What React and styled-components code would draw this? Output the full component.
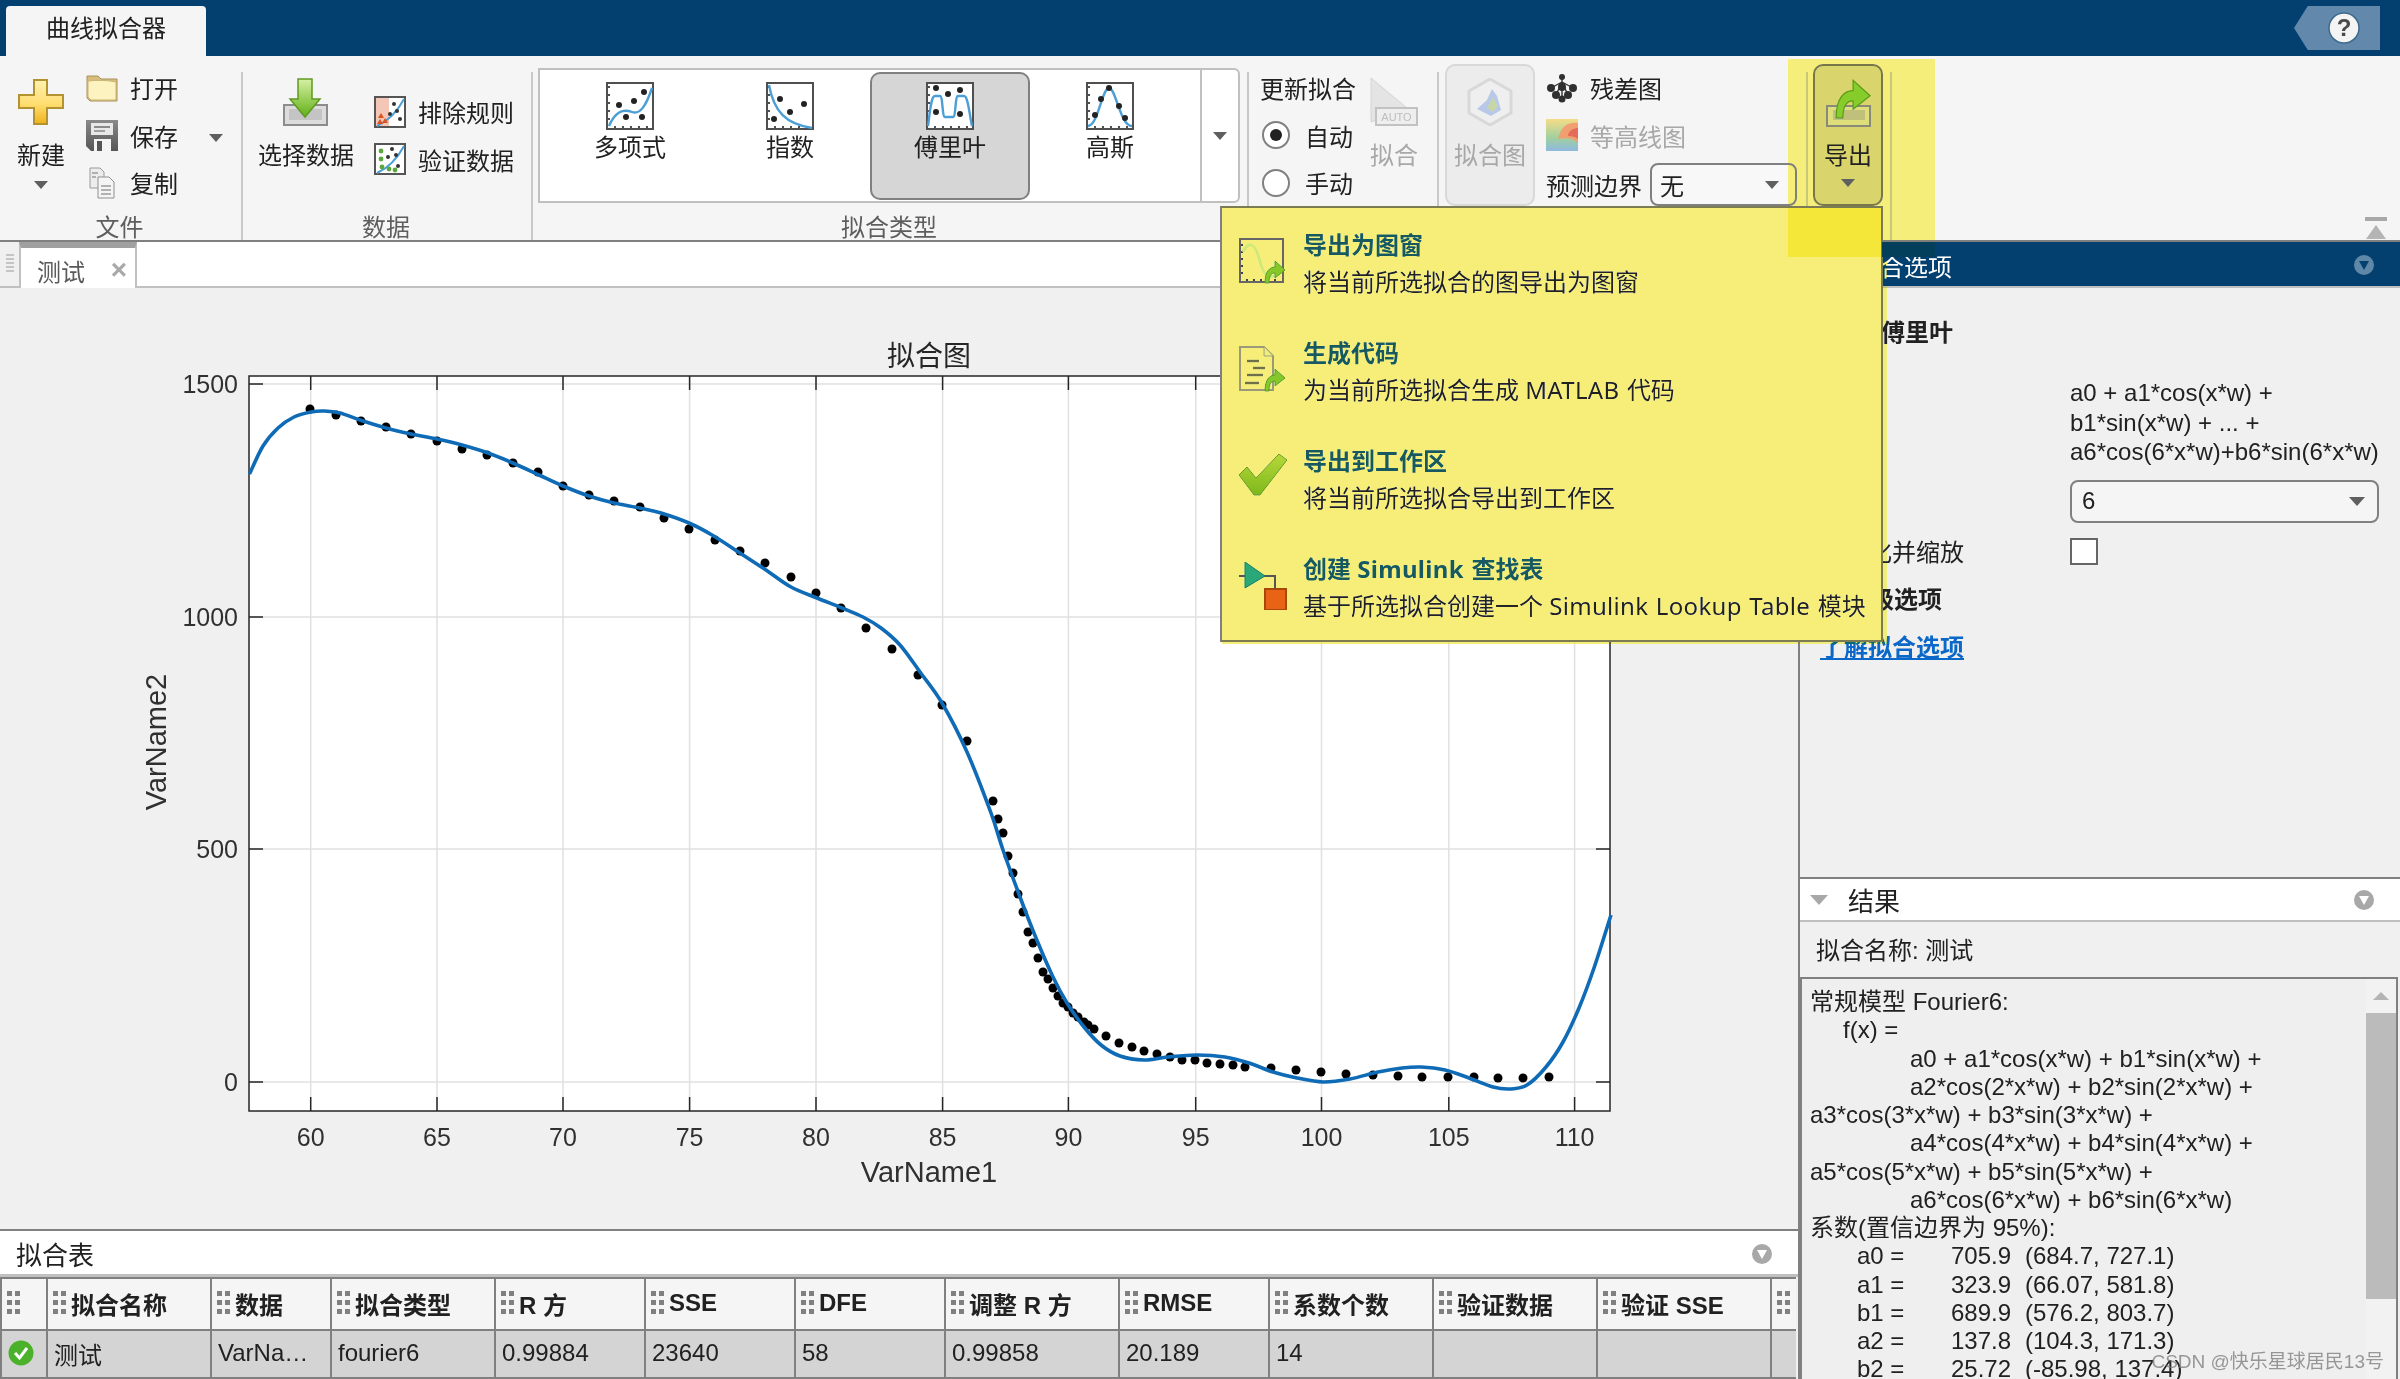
import React from 'react';
import styled, { createGlobalStyle } from 'styled-components';

const SANS = '"Liberation Sans", "Noto Sans CJK SC", sans-serif';
const UI = '"Noto Sans", "Noto Sans CJK SC", sans-serif';

const GlobalStyle = createGlobalStyle`
  html, body { margin: 0; padding: 0; background: #f0f0f0; }
  * { box-sizing: border-box; }
`;

/* ---------- chart data, in screen pixels of the plot ---------- */
const CURVE = [
  [249.5,474],[263,446],[278,428],[294,417],[311,412],[324.5,411],[340,413],[360,420],[386,428],[411,434],
  [437,439],[462,445],[488,453],[513,463],[539,475],[563,486],[589,496],[614,503],[640,508],[661,513],
  [689,523],[712,535],[740,553],[766,570],[791,587],[817,598],[842,608],[863,617],[881,628],[900,645],
  [920,672],[942,703],[967,752],[991,813],[1003,850],[1020,897],[1036,938],[1053,977],[1067,1003],[1084,1027],
  [1101,1045],[1120,1056],[1144,1060],[1168,1057],[1197,1055],[1225,1057],[1249,1063],[1273,1072],[1297,1078],[1323,1082],
  [1350,1079],[1378,1072],[1402,1068],[1421,1067],[1445,1070],[1469,1078],[1493,1087],[1510,1089],[1527,1085],[1546,1067],
  [1563,1042],[1579,1008],[1594,968],[1611,915],
];
const DOTS = [
  [310,409],[336,415],[361,421],[386,427],[411,434],[437,441],[462,449],[487,455],[513,463],[538,472],
  [563,486],[589,495],[614,501],[640,507],[664,518],[689,529],[715,540],[740,551],[765,563],[791,577],
  [816,593],[841,608],[866,628],[892,649],[918,675],[942,705],[967,741],[993,801],[998,819],[1003,833],
  [1008,856],[1013,873],[1018,894],[1023,912],[1028,932],[1033,943],[1038,958],[1043,972],[1048,979],[1053,988],
  [1058,996],[1063,1003],[1068,1007],[1073,1013],[1078,1017],[1084,1022],[1088,1025],[1094,1029],[1106,1036],[1119,1043],
  [1132,1047],[1144,1051],[1157,1054],[1170,1057],[1182,1060],[1195,1060],[1207,1063],[1220,1064],[1233,1065],[1245,1067],
  [1271,1068],[1296,1070],[1321,1072],[1346,1074],[1373,1075],[1398,1076],[1422,1077],[1448,1077],[1474,1077],[1498,1078],
  [1523,1078],[1549,1077],
];
const X_TICKS = [[60,310.7],[65,437],[70,563],[75,689.6],[80,816],[85,942.6],[90,1068.4],[95,1195.7],[100,1321.5],[105,1448.8],[110,1574.6]];
const Y_TICKS = [[1500,384],[1000,617],[500,849],[0,1082]];

// catmull-rom through the points so the fit is smooth
const smoothPath = (pts) => {
  let d = `M${pts[0][0]} ${pts[0][1]}`;
  for (let i = 0; i < pts.length - 1; i++) {
    const p0 = pts[i - 1] || pts[i];
    const p1 = pts[i];
    const p2 = pts[i + 1];
    const p3 = pts[i + 2] || p2;
    d += ` C${p1[0] + (p2[0] - p0[0]) / 6} ${p1[1] + (p2[1] - p0[1]) / 6} ${p2[0] - (p3[0] - p1[0]) / 6} ${p2[1] - (p3[1] - p1[1]) / 6} ${p2[0]} ${p2[1]}`;
  }
  return d;
};

/* ---------- icons ---------- */
const GREEN_ARROW = 'M3 24C3 12 8 8 13 8L13 2L23 11L13 19L13 14C9 14 7 17 7 24Z';

const PlusIcon = () => (
  <svg width="46" height="46" viewBox="0 0 46 46">
    <defs>
      <linearGradient id="plusFill" x1="0" y1="0" x2="0" y2="1">
        <stop offset="0" stopColor="#fff1b0" /><stop offset="0.55" stopColor="#ffdd70" /><stop offset="1" stopColor="#eeb21c" />
      </linearGradient>
    </defs>
    <path d="M16 1H29V16H45V29H29V45H16V29H1V16H16Z" fill="url(#plusFill)" stroke="#b39230" strokeWidth="2" />
  </svg>
);
const FolderIcon = () => (
  <svg width="32" height="28" viewBox="0 0 32 28">
    <path d="M1 2H12L15 5H31V27H4L1 24Z" fill="#d8bd7c" stroke="#a8925c" />
    <path d="M2 7C10 6 22 6 30 8V26H5L2 23Z" fill="#fdf3c0" stroke="#c9b475" />
  </svg>
);
const SaveIcon = () => (
  <svg width="32" height="32" viewBox="0 0 32 32">
    <defs>
      <linearGradient id="saveFill" x1="0" y1="0" x2="0" y2="1">
        <stop offset="0" stopColor="#8a8a8a" /><stop offset="1" stopColor="#555" />
      </linearGradient>
    </defs>
    <path d="M0 1H32V32H5L0 27Z" fill="url(#saveFill)" />
    <rect x="5" y="4" width="22" height="12" fill="#e8e8e8" />
    <rect x="8" y="7" width="16" height="2" fill="#8a8a8a" />
    <rect x="8" y="11" width="11" height="2" fill="#a0a0a0" />
    <rect x="8" y="20" width="17" height="12" fill="#f4f4f4" />
    <rect x="11" y="22" width="5" height="10" fill="#555" />
  </svg>
);
const CopyIcon = () => (
  <svg width="26" height="32" viewBox="0 0 26 32">
    <path d="M1 1H11L15 5V21H1Z" fill="#ececec" stroke="#9a9a9a" />
    <path d="M9 10H20L25 15V31H9Z" fill="#f4f4f4" stroke="#8f8f8f" />
    <path d="M12 19H22M12 23H22M12 27H22M3 6H9M3 10H7" stroke="#9a9a9a" strokeWidth="1.5" />
  </svg>
);
const ImportIcon = () => (
  <svg width="46" height="48" viewBox="0 0 46 48">
    <defs>
      <linearGradient id="impFill" x1="0" y1="0" x2="0" y2="1">
        <stop offset="0" stopColor="#d6f0a4" /><stop offset="1" stopColor="#62b016" />
      </linearGradient>
    </defs>
    <rect x="1" y="27" width="43" height="20" fill="#dcdcdc" stroke="#8c8c8c" strokeWidth="2" />
    <rect x="6" y="31" width="33" height="11" fill="#c4c4c4" />
    <path d="M15 1H29V21H37L22 39L7 21H15Z" fill="url(#impFill)" stroke="#5f9a20" strokeWidth="1.5" />
  </svg>
);

const Ticks = () => (
  <path d="M3 4V40M8 45H46" stroke="#505050" strokeWidth="2" strokeDasharray="2 6" fill="none" />
);
const FitIcon = ({ curve, dots }) => (
  <svg width="48" height="48" viewBox="0 0 48 48">
    <rect x="1" y="1" width="46" height="46" fill="#fff" stroke="#4f4f4f" strokeWidth="2" />
    <Ticks />
    <path d={curve} fill="none" stroke="#4c9ed6" strokeWidth="2.4" />
    {dots.map(([x, y]) => <circle key={`${x}-${y}`} cx={x} cy={y} r="3" fill="#222" />)}
  </svg>
);
const ExcludeIcon = () => (
  <svg width="32" height="32" viewBox="0 0 32 32">
    <rect x="1" y="1" width="30" height="30" fill="#fff" stroke="#555" strokeWidth="2" />
    <rect x="2" y="2" width="13" height="28" fill="#f3c6b8" />
    <path d="M3 30C12 26 22 18 30 3" fill="none" stroke="#4c9ed6" strokeWidth="2" />
    {[[20, 8], [23, 15], [16, 18], [26, 23]].map(([x, y]) => <circle key={x} cx={x} cy={y} r="2" fill="#333" />)}
    {[[7, 20], [11, 25], [6, 26]].map(([x, y]) => <path key={x} d={`M${x - 3} ${y + 2}L${x} ${y - 3}L${x + 3} ${y + 2}Z`} fill="#e0521e" />)}
  </svg>
);
const ValidateIcon = () => (
  <svg width="32" height="32" viewBox="0 0 32 32">
    <rect x="1" y="1" width="30" height="30" fill="#fff" stroke="#555" strokeWidth="2" />
    <path d="M3 30C12 26 22 18 30 3" fill="none" stroke="#4c9ed6" strokeWidth="2" />
    {[[18, 6], [22, 12], [14, 14], [24, 23]].map(([x, y]) => <circle key={x} cx={x} cy={y} r="2" fill="#333" />)}
    {[[7, 8], [7, 16], [8, 24], [15, 26], [21, 27]].map(([x, y]) => <circle key={x + y} cx={x} cy={y} r="2.4" fill="#5aa83a" />)}
  </svg>
);
const AutoFitIcon = () => (
  <svg width="50" height="48" viewBox="0 0 50 48">
    <path d="M2 0L38 30L2 44Z" fill="#e4e4e4" stroke="#d4d4d4" />
    <rect x="7" y="30" width="41" height="17" fill="#eeeeee" stroke="#c2c2c2" strokeWidth="2" />
    <AutoLabel x="27.5" y="43">AUTO</AutoLabel>
  </svg>
);
const SurfaceIcon = () => (
  <svg width="46" height="48" viewBox="0 0 46 48">
    <path d="M23 1L44 13V35L23 47L2 35V13Z" fill="#efefef" stroke="#d8d8d8" strokeWidth="3" />
    <path d="M10 31L20 22L25 11L30 18L34 32L24 38Z" fill="#b8c8e8" />
    <path d="M20 30L26 19L31 28L26 34Z" fill="#c7d6a8" />
  </svg>
);
const ResidualIcon = () => (
  <svg width="32" height="30" viewBox="0 0 32 30">
    <path d="M16 3V26M16 9L5 15M16 9L27 15M16 9L10 22M16 9L22 22" stroke="#333" strokeWidth="1.4" fill="none" />
    {[[16, 4, 3], [5, 15, 4], [27, 15, 4], [16, 14, 4], [10, 22, 4], [22, 22, 4], [16, 26, 3.5]].map(([x, y, r]) => (
      <circle key={`${x}${y}`} cx={x} cy={y} r={r} fill="#303030" />
    ))}
  </svg>
);
const ContourIcon = () => (
  <svg width="32" height="32" viewBox="0 0 32 32">
    <defs>
      <linearGradient id="contourFill" x1="0" y1="0" x2="0" y2="1">
        <stop offset="0" stopColor="#f5dc88" /><stop offset="0.6" stopColor="#9fd0a0" /><stop offset="1" stopColor="#8fb8e0" />
      </linearGradient>
    </defs>
    <rect width="32" height="32" fill="url(#contourFill)" />
    <path d="M32 4C18 2 14 12 12 20C22 18 28 20 32 24Z" fill="#f0a070" />
    <path d="M32 9C26 9 22 13 22 17C26 17 30 18 32 20Z" fill="#e46a5a" />
  </svg>
);
const ExportIcon = () => (
  <svg width="46" height="50" viewBox="0 0 46 50">
    <rect x="2" y="29" width="43" height="20" fill="#dedede" stroke="#8a8a8a" strokeWidth="2" />
    <rect x="8" y="33" width="32" height="10" fill="#c0c0c0" />
    <g transform="translate(6 0) scale(1.7)">
      <path d={GREEN_ARROW} fill="#86cc2a" stroke="#5a9a16" strokeWidth="0.7" />
    </g>
  </svg>
);
const FigureMenuIcon = () => (
  <svg width="48" height="48" viewBox="0 0 48 48">
    <rect x="1" y="1" width="43" height="43" fill="#fff" stroke="#666" strokeWidth="2" />
    <path d="M3 6V38M7 42H40" stroke="#444" strokeWidth="2" strokeDasharray="2 5" />
    <path d="M4 14C10 2 16 6 20 20C24 36 28 40 36 38" fill="none" stroke="#cfe8a0" strokeWidth="3" />
    <g transform="translate(23 21)"><path d={GREEN_ARROW} fill="#86c82a" stroke="#5a9a16" /></g>
  </svg>
);
const CodeMenuIcon = () => (
  <svg width="48" height="48" viewBox="0 0 48 48">
    <path d="M1 1H25L34 10V44H1Z" fill="#fff" stroke="#9a9a7a" strokeWidth="2" />
    <path d="M25 1V10H34" fill="#eee" stroke="#9a9a7a" />
    <path d="M8 15H20M14 22H26M8 29H24M6 37H20" stroke="#6f6f4a" strokeWidth="2.4" />
    <g transform="translate(23 21)"><path d={GREEN_ARROW} fill="#86c82a" stroke="#5a9a16" /></g>
  </svg>
);
const CheckMenuIcon = () => (
  <svg width="48" height="42" viewBox="0 0 48 42">
    <defs>
      <linearGradient id="checkFill" x1="0" y1="0" x2="0" y2="1">
        <stop offset="0" stopColor="#b8d83a" /><stop offset="1" stopColor="#7db81c" />
      </linearGradient>
    </defs>
    <path d="M0 21L8 13L17 24L40 0L48 6L21 41H15Z" fill="url(#checkFill)" stroke="#6a9a18" />
  </svg>
);
const SimulinkMenuIcon = () => (
  <svg width="48" height="48" viewBox="0 0 48 48">
    <path d="M0 14H36V28" fill="none" stroke="#555" strokeWidth="2" />
    <path d="M6 0L26 14L6 26Z" fill="#2aa878" stroke="#1a7a60" />
    <rect x="26" y="27" width="21" height="21" fill="#e86414" stroke="#a84808" strokeWidth="2" />
  </svg>
);
const RoundDown = ({ $light }) => (
  <svg width="20" height="22" viewBox="0 0 20 22">
    <circle cx="10" cy="11" r="10" fill={$light ? '#5f87a8' : '#a8a8a8'} />
    <path d="M5 7H15L10 16Z" fill={$light ? '#03406f' : '#fff'} />
  </svg>
);
const StatusOk = () => (
  <svg width="26" height="26" viewBox="0 0 26 26">
    <circle cx="13" cy="13" r="12.5" fill="#4bb02a" />
    <path d="M7 13L11.5 18L19 8" fill="none" stroke="#fff" strokeWidth="3" />
  </svg>
);
const Grip = () => (
  <svg width="13" height="24" viewBox="0 0 13 24">
    {[0, 9, 18].map((y) => (
      <g key={y}>
        <rect x="0" y={y} width="5" height="5" fill="#808080" />
        <rect x="8" y={y} width="5" height="5" fill="#808080" />
      </g>
    ))}
  </svg>
);
const PinIcon = () => (
  <svg width="22" height="22" viewBox="0 0 22 22">
    <rect width="22" height="4" fill="#a8a8a8" />
    <path d="M11 8L21 22H1Z" fill="#b4b4b4" />
  </svg>
);
const HelpIcon = () => (
  <svg width="32" height="32" viewBox="0 0 32 32">
    <circle cx="16" cy="16" r="15" fill="#f4f4f4" stroke="#3f6a8c" strokeWidth="1.5" />
    <HelpMark x="16" y="24">?</HelpMark>
  </svg>
);

const AutoLabel = styled.text`
  font: 11px ${SANS};
  fill: #bdbdbd;
  text-anchor: middle;
`;
const HelpMark = styled.text`
  font: bold 24px ${SANS};
  fill: #4a4a4a;
  text-anchor: middle;
`;

/* ---------- app frame ---------- */
const Page = styled.div`
  position: relative;
  isolation: isolate;
  width: 2400px;
  height: 1379px;
  overflow: hidden;
  display: flex;
  flex-direction: column;
  font-family: ${SANS};
  font-size: 24px;
  color: #212121;
  background: #f0f0f0;
`;
const TitleBar = styled.div`
  flex: none;
  height: 56px;
  padding-top: 6px;
  display: flex;
  background: #03406f;
`;
const AppTab = styled.div`
  width: 200px;
  margin-left: 6px;
  height: 50px;
  line-height: 44px;
  text-align: center;
  font-family: ${UI};
  background: #f5f5f5;
  border-radius: 4px 4px 0 0;
`;
const HelpButton = styled.div`
  margin-left: auto;
  margin-right: 20px;
  width: 86px;
  height: 44px;
  padding-left: 34px;
  padding-top: 6px;
  background: #6289ac;
  clip-path: polygon(16% 0, 100% 0, 100% 100%, 16% 100%, 0 50%);
`;

/* ---------- ribbon ---------- */
const Ribbon = styled.div`
  flex: none;
  height: 186px;
  display: flex;
  font-family: ${UI};
  background: #f5f5f5;
  border-bottom: 2px solid #808080;
`;
const Sep = styled.div`
  flex: none;
  width: 2px;
  height: 168px;
  margin-top: 16px;
  background: #c8c8c8;
`;
const Group = styled.div`
  flex: none;
  width: ${(p) => p.$w}px;
  height: 184px;
  display: flex;
  flex-direction: column;
`;
const GroupBody = styled.div`
  flex: none;
  height: 156px;
  display: flex;
  align-items: flex-start;
`;
const GroupLabel = styled.div`
  height: 28px;
  padding: 1px 2px 0 0;
  line-height: 28px;
  text-align: center;
  color: #5e5e5e;
`;
const LargeButton = styled.div`
  flex: none;
  width: ${(p) => p.$w}px;
  margin-left: ${(p) => p.$ml || 0}px;
  padding-top: 22px;
  display: flex;
  flex-direction: column;
  align-items: center;
  color: ${(p) => (p.$muted ? '#a8a8a8' : '#212121')};
`;
const BoxButton = styled.div`
  flex: none;
  width: ${(p) => p.$w}px;
  height: 142px;
  margin-left: ${(p) => p.$ml || 0}px;
  margin-top: 8px;
  padding-top: 12px;
  display: flex;
  flex-direction: column;
  align-items: center;
  border-radius: 10px;
  border: 2px solid ${(p) => (p.$active ? '#77774a' : '#d8d8d8')};
  background: ${(p) => (p.$active ? '#d9d46c' : '#ececec')};
  color: ${(p) => (p.$active ? '#212121' : '#a8a8a8')};
`;
const IconBox = styled.div`
  height: 48px;
  display: flex;
  align-items: center;
  justify-content: center;
`;
const BigLabel = styled.div`
  margin-top: 15px;
  line-height: 28px;
  white-space: nowrap;
`;
const DownArrow = styled.div`
  flex: none;
  width: 0;
  height: 0;
  border-left: ${(p) => p.$s || 7}px solid transparent;
  border-right: ${(p) => p.$s || 7}px solid transparent;
  border-top: ${(p) => (p.$s || 7) + 1}px solid ${(p) => p.$c || '#5f5f5f'};
  margin-top: ${(p) => p.$mt || 0}px;
  margin-left: ${(p) => p.$ml || 0}px;
  margin-right: ${(p) => p.$mr || 0}px;
`;
const SmallList = styled.div`
  flex: none;
  width: ${(p) => p.$w}px;
  margin-left: ${(p) => p.$ml || 0}px;
  padding-top: ${(p) => p.$top}px;
  display: flex;
  flex-direction: column;
`;
const SmallRow = styled.div`
  height: 47.5px;
  display: flex;
  align-items: center;
  gap: 12px;
  white-space: nowrap;
  color: ${(p) => (p.$muted ? '#a8a8a8' : '#212121')};
`;
const IconSlot = styled.div`
  flex: none;
  width: 32px;
  display: flex;
  justify-content: center;
`;
const Radio = styled.div`
  flex: none;
  width: 28px;
  height: 28px;
  margin-left: 2px;
  margin-right: 3px;
  border-radius: 50%;
  background: #fff;
  border: 2px solid #808080;
  display: flex;
  align-items: center;
  justify-content: center;
  &::after {
    content: '';
    width: 12px;
    height: 12px;
    border-radius: 50%;
    background: ${(p) => (p.$on ? '#212121' : 'transparent')};
  }
`;
const BoundsRow = styled.div`
  margin-top: 4px;
  height: 43px;
  display: flex;
  align-items: center;
  gap: 8px;
  white-space: nowrap;
`;
const BoundsSelect = styled.div`
  width: 147px;
  height: 43px;
  padding: 0 16px 0 8px;
  display: flex;
  align-items: center;
  justify-content: space-between;
  background: #f8f8f8;
  border: 2px solid #808080;
  border-radius: 8px;
`;
const Gallery = styled.div`
  flex: none;
  width: 702px;
  height: 135px;
  margin-left: 5px;
  margin-top: 12px;
  padding-left: 10px;
  display: flex;
  background: #fff;
  border: 2px solid #c0c0c0;
  border-radius: 0 6px 6px 0;
`;
const GalleryItem = styled.div`
  flex: none;
  width: 160px;
  height: 128px;
  margin-top: 2px;
  padding-top: 8px;
  display: flex;
  flex-direction: column;
  align-items: center;
  border-radius: 10px;
  border: 2px solid ${(p) => (p.$on ? '#808080' : 'transparent')};
  background: ${(p) => (p.$on ? '#d6d6d6' : 'transparent')};
`;
const GalleryLabel = styled.div`
  margin-top: 3px;
  line-height: 28px;
`;
const GalleryScroll = styled.div`
  margin-left: auto;
  width: 38px;
  display: flex;
  align-items: center;
  justify-content: center;
  border-left: 2px solid #c0c0c0;
`;
const PinSlot = styled.div`
  margin-left: auto;
  margin-right: 13px;
  align-self: flex-end;
  margin-bottom: 5px;
  height: 22px;
`;

/* ---------- work area ---------- */
const Work = styled.div`
  flex: 1;
  min-height: 0;
  display: flex;
`;
const LeftPane = styled.div`
  flex: none;
  width: 1798px;
  display: flex;
  flex-direction: column;
`;
const DocStrip = styled.div`
  flex: none;
  height: 46px;
  display: flex;
  background: #fff;
  border-bottom: 2px solid #c0c0c0;
`;
const StripGrip = styled.div`
  width: 19px;
  background: #f0f0f0;
  display: flex;
  justify-content: center;
  padding-top: 12px;
  &::after {
    content: '';
    width: 8px;
    height: 20px;
    background: repeating-linear-gradient(#c4c4c4 0 2px, transparent 2px 4px);
  }
`;
const DocTab = styled.div`
  width: 118px;
  height: 46px;
  display: flex;
  align-items: center;
  justify-content: space-between;
  padding: 4px 8px 0 16px;
  font-family: ${UI};
  color: #5a5a5a;
  background: #fff;
  border-top: 6px solid #a0a0a0;
  border-left: 2px solid #c0c0c0;
  border-right: 2px solid #c0c0c0;
`;
const TabClose = styled.span`
  font: bold 28px ${SANS};
  color: #a8a8a8;
`;
const PlotArea = styled.div`
  flex: 1;
  min-height: 0;
`;
const PlotSvg = styled.svg`
  display: block;
  width: 1798px;
  height: 940px;
`;
const PlotTitle = styled.text`
  font: 28px ${UI};
  fill: #262626;
  text-anchor: middle;
`;
const TickText = styled.text`
  font: 25px ${SANS};
  fill: #303030;
  text-anchor: ${(p) => p.$anchor};
`;
const AxisLabel = styled.text`
  font: 29px ${SANS};
  fill: #303030;
  text-anchor: middle;
`;
const PanelHead = styled.div`
  flex: none;
  height: 48px;
  padding: 2px 26px 0 16px;
  display: flex;
  align-items: center;
  justify-content: space-between;
  font-size: 26px;
  font-family: ${UI};
  background: #fff;
  border-top: 2px solid #808080;
  border-bottom: 3px solid #c0c0c0;
`;
const COLS = '46px 164px 120px 164px 150px 150px 150px 174px 150px 164px 164px 174px 24px';
const Table = styled.div`
  flex: none;
  width: 1796px;
  height: 102px;
  display: flex;
  flex-direction: column;
  border-top: 2px solid #808080;
  border-left: 2px solid #808080;
  border-bottom: 2px solid #808080;
`;
const TableHeadRow = styled.div`
  height: 52px;
  display: grid;
  grid-template-columns: ${COLS};
  background: #f5f5f5;
  border-bottom: 2px solid #808080;
`;
const TableBodyRow = styled.div`
  flex: 1;
  display: grid;
  grid-template-columns: ${COLS};
  background: #d4d4d4;
`;
const HeadCell = styled.div`
  display: flex;
  align-items: center;
  gap: 5px;
  padding: 0 0 2px 5px;
  font-weight: bold;
  white-space: nowrap;
  border-right: 2px solid #808080;
  &:last-child { border-right: 0; }
`;
const BodyCell = styled.div`
  display: flex;
  align-items: center;
  padding: 0 0 2px 6px;
  white-space: nowrap;
  border-right: 2px solid #808080;
  &:last-child { border-right: 0; }
`;

/* ---------- right pane ---------- */
const RightPane = styled.div`
  flex: none;
  width: 602px;
  display: flex;
  flex-direction: column;
  border-left: 2px solid #808080;
`;
const OptionsHead = styled.div`
  flex: none;
  height: 46px;
  padding: 2px 26px 0 56px;
  display: flex;
  align-items: center;
  justify-content: space-between;
  color: #fff;
  font-family: ${UI};
  background: #03406f;
  border-bottom: 2px solid #c0c0c0;
`;
const OptionsBody = styled.div`
  flex: 1;
  min-height: 0;
  padding: 31px 0 0 20px;
  display: grid;
  grid-template-columns: 250px 309px;
  grid-auto-rows: min-content;
  align-content: start;
`;
const FitName = styled.div`
  grid-column: 1 / -1;
  margin-left: 61px;
  line-height: 28px;
  font-weight: bold;
`;
const Formula = styled.div`
  grid-column: 2;
  margin-top: 31px;
  line-height: 29.5px;
`;
const FieldSelect = styled.div`
  grid-column: 2;
  margin-top: 13px;
  height: 43px;
  padding: 0 12px 0 10px;
  display: flex;
  align-items: center;
  justify-content: space-between;
  background: #f5f5f5;
  border: 2px solid #808080;
  border-radius: 8px;
`;
const FieldLabel = styled.div`
  margin-top: 15px;
  line-height: 28px;
  font-family: ${UI};
`;
const Checkbox = styled.div`
  margin-top: 15px;
  width: 28px;
  height: 27px;
  background: #fff;
  border: 2px solid #666;
`;
const SectionTitle = styled.div`
  grid-column: 1 / -1;
  margin-top: 20px;
  padding-left: 26px;
  line-height: 28px;
  font-weight: bold;
`;
const HelpLink = styled.a`
  grid-column: 1 / -1;
  margin-top: 20px;
  line-height: 28px;
  font-weight: bold;
  color: #0b68c8;
  text-decoration: underline;
`;
const ResultsHead = styled.div`
  flex: none;
  height: 45px;
  padding: 0 26px 0 8px;
  display: flex;
  align-items: center;
  font-size: 26px;
  font-family: ${UI};
  background: #fff;
  border-top: 2px solid #808080;
  border-bottom: 2px solid #c0c0c0;
`;
const HeadText = styled.span`
  margin-left: 20px;
  margin-right: auto;
`;
const ResultName = styled.div`
  flex: none;
  height: 55px;
  padding: 0 0 3px 16px;
  display: flex;
  align-items: center;
`;
const ResultBox = styled.div`
  flex: none;
  width: 598px;
  height: 402px;
  display: flex;
  border: 2px solid #808080;
  border-bottom: 0;
  background: #efefef;
`;
const ResultText = styled.div`
  flex: 1;
  min-width: 0;
  padding: 9px 0 0 8px;
  overflow: hidden;
  line-height: 28.25px;
  white-space: nowrap;
`;
const ResultLine = styled.div`
  padding-left: ${(p) => p.$indent || 0}px;
`;
const CoefRow = styled.div`
  padding-left: 47px;
  display: grid;
  grid-template-columns: 94px 74px auto;
`;
const ScrollTrack = styled.div`
  flex: none;
  width: 30px;
  background: #f2f2f2;
  display: flex;
  flex-direction: column;
  align-items: center;
`;
const ScrollUp = styled.div`
  height: 34px;
  padding-top: 13px;
  &::after {
    content: '';
    display: block;
    border-left: 8px solid transparent;
    border-right: 8px solid transparent;
    border-bottom: 8px solid #b4b4b4;
  }
`;
const ScrollThumb = styled.div`
  width: 30px;
  height: 286px;
  background: #bbbbbb;
`;

/* ---------- export menu and the yellow marks drawn over the screenshot ---------- */
const ExportMenu = styled.div`
  position: absolute;
  left: 1220px;
  top: 206px;
  width: 663px;
  height: 436px;
  padding: 19px 0 0 17px;
  display: flex;
  flex-direction: column;
  gap: 34px;
  font-family: ${UI};
  background: #fff;
  border: 2px solid #7c7b52;
  border-left-color: #808080;
`;
const MenuItem = styled.div`
  height: 74px;
  display: flex;
  gap: 16px;
`;
const MenuIcon = styled.div`
  flex: none;
  width: 48px;
  margin-top: 11px;
`;
const MenuTitle = styled.div`
  line-height: 36px;
  font-weight: bold;
  color: #17595e;
`;
const MenuDesc = styled.div`
  line-height: 38px;
  white-space: nowrap;
`;
const Latin = styled.span`
  letter-spacing: 0.3px;
  word-spacing: 1px;
`;
const Highlight = styled.div`
  position: absolute;
  left: ${(p) => p.$x}px;
  top: ${(p) => p.$y}px;
  width: ${(p) => p.$w}px;
  height: ${(p) => p.$h}px;
  background: ${(p) => p.$c || '#f7ee7a'};
  mix-blend-mode: darken;
  pointer-events: none;
`;
const Watermark = styled.div`
  position: absolute;
  right: 16px;
  bottom: 6px;
  font-size: 19px;
  color: rgba(120, 120, 120, 0.75);
  white-space: nowrap;
`;

const GALLERY = [
  { name: '多项式', curve: 'M3 44C10 28 18 27 26 30S40 24 46 6', dots: [[38, 10], [28, 19], [13, 23], [20, 35], [36, 35]] },
  { name: '指数', curve: 'M3 3C8 30 20 42 46 46', dots: [[14, 17], [24, 30], [8, 37], [38, 22]] },
  { name: '傅里叶', on: true, curve: 'M2 44C4 30 5 14 9 14L14 14C17 14 16 35 19 35L27 35C30 35 29 14 32 14L38 14C42 14 43 30 46 44', dots: [[10, 6], [22, 12], [34, 8], [10, 30], [34, 32]] },
  { name: '高斯', curve: 'M2 44C12 44 16 6 23 6S34 44 46 44', dots: [[23, 6], [15, 17], [33, 24], [9, 33], [39, 36]] },
];

const HEADERS = ['', '拟合名称', '数据', '拟合类型', 'R 方', 'SSE', 'DFE', '调整 R 方', 'RMSE', '系数个数', '验证数据', '验证 SSE', ''];
const ROW = ['测试', 'VarNa…', 'fourier6', '0.99884', '23640', '58', '0.99858', '20.189', '14', '', '', ''];

const COEFS = [
  ['a0 =', '705.9', '(684.7, 727.1)'],
  ['a1 =', '323.9', '(66.07, 581.8)'],
  ['b1 =', '689.9', '(576.2, 803.7)'],
  ['a2 =', '137.8', '(104.3, 171.3)'],
  ['b2 =', '25.72', '(-85.98, 137.4)'],
];

const MENU = [
  { icon: <FigureMenuIcon />, title: '导出为图窗', desc: '将当前所选拟合的图导出为图窗' },
  { icon: <CodeMenuIcon />, title: '生成代码', desc: <>为当前所选拟合生成 <Latin>MATLAB </Latin>代码</> },
  { icon: <CheckMenuIcon />, title: '导出到工作区', desc: '将当前所选拟合导出到工作区' },
  { icon: <SimulinkMenuIcon />, title: <>创建 <Latin>Simulink </Latin>查找表</>, desc: <>基于所选拟合创建一个 <Latin>Simulink Lookup Table </Latin>模块</> },
];

const Plot = () => (
  <PlotSvg viewBox="0 288 1798 940">
    <PlotTitle x="929" y="366">拟合图</PlotTitle>
    <rect x="249" y="376" width="1361" height="735" fill="#fff" />
    {X_TICKS.map(([v, x]) => <line key={v} x1={x} x2={x} y1="376" y2="1111" stroke="#e0e0e0" strokeWidth="1.5" />)}
    {Y_TICKS.map(([v, y]) => <line key={v} x1="249" x2="1610" y1={y} y2={y} stroke="#e0e0e0" strokeWidth="1.5" />)}
    <rect x="249" y="376" width="1361" height="735" fill="none" stroke="#262626" strokeWidth="1.5" />
    {X_TICKS.map(([v, x]) => (
      <g key={v}>
        <line x1={x} x2={x} y1="376" y2="390" stroke="#262626" strokeWidth="1.5" />
        <line x1={x} x2={x} y1="1097" y2="1111" stroke="#262626" strokeWidth="1.5" />
        <TickText $anchor="middle" x={x} y="1146">{v}</TickText>
      </g>
    ))}
    {Y_TICKS.map(([v, y]) => (
      <g key={v}>
        <line x1="249" x2="263" y1={y} y2={y} stroke="#262626" strokeWidth="1.5" />
        <line x1="1596" x2="1610" y1={y} y2={y} stroke="#262626" strokeWidth="1.5" />
        <TickText $anchor="end" x="238" y={y + 9}>{v}</TickText>
      </g>
    ))}
    {DOTS.map(([x, y]) => <circle key={`${x}-${y}`} cx={x} cy={y} r="4.5" fill="#000" />)}
    <path d={smoothPath(CURVE)} fill="none" stroke="#0f6bb5" strokeWidth="3.6" />
    <AxisLabel x="929" y="1182">VarName1</AxisLabel>
    <AxisLabel x="166" y="742" transform="rotate(-90 166 742)">VarName2</AxisLabel>
  </PlotSvg>
);

const RibbonBar = () => (
  <Ribbon>
    <Group $w={241}>
      <GroupBody>
        <LargeButton $w={82}>
          <IconBox><PlusIcon /></IconBox>
          <BigLabel>新建</BigLabel>
          <DownArrow $mt={12} />
        </LargeButton>
        <SmallList $w={120} $ml={4} $top={8}>
          <SmallRow><IconSlot><FolderIcon /></IconSlot>打开</SmallRow>
          <SmallRow><IconSlot><SaveIcon /></IconSlot>保存</SmallRow>
          <SmallRow><IconSlot><CopyIcon /></IconSlot>复制</SmallRow>
        </SmallList>
        <DownArrow $mt={78} $ml={3} />
      </GroupBody>
      <GroupLabel>文件</GroupLabel>
    </Group>
    <Sep />
    <Group $w={288}>
      <GroupBody>
        <LargeButton $w={96} $ml={15}>
          <IconBox><ImportIcon /></IconBox>
          <BigLabel>选择数据</BigLabel>
        </LargeButton>
        <SmallList $w={150} $ml={20} $top={32}>
          <SmallRow><IconSlot><ExcludeIcon /></IconSlot>排除规则</SmallRow>
          <SmallRow><IconSlot><ValidateIcon /></IconSlot>验证数据</SmallRow>
        </SmallList>
      </GroupBody>
      <GroupLabel>数据</GroupLabel>
    </Group>
    <Sep />
    <Group $w={714}>
      <GroupBody>
        <Gallery>
          {GALLERY.map((g) => (
            <GalleryItem key={g.name} $on={g.on}>
              <FitIcon curve={g.curve} dots={g.dots} />
              <GalleryLabel>{g.name}</GalleryLabel>
            </GalleryItem>
          ))}
          <GalleryScroll><DownArrow /></GalleryScroll>
        </Gallery>
      </GroupBody>
      <GroupLabel>拟合类型</GroupLabel>
    </Group>
    <Sep />
    <Group $w={188}>
      <GroupBody>
        <SmallList $w={107} $ml={11} $top={8}>
          <SmallRow>更新拟合</SmallRow>
          <SmallRow><Radio $on />自动</SmallRow>
          <SmallRow><Radio />手动</SmallRow>
        </SmallList>
        <LargeButton $w={50} $ml={2} $muted>
          <IconBox><AutoFitIcon /></IconBox>
          <BigLabel>拟合</BigLabel>
        </LargeButton>
      </GroupBody>
    </Group>
    <Sep />
    <Group $w={367}>
      <GroupBody>
        <BoxButton $w={90} $ml={6}>
          <IconBox><SurfaceIcon /></IconBox>
          <BigLabel>拟合图</BigLabel>
        </BoxButton>
        <SmallList $w={260} $ml={11} $top={8}>
          <SmallRow><IconSlot><ResidualIcon /></IconSlot>残差图</SmallRow>
          <SmallRow $muted><IconSlot><ContourIcon /></IconSlot>等高线图</SmallRow>
          <BoundsRow>
            预测边界
            <BoundsSelect>无<DownArrow /></BoundsSelect>
          </BoundsRow>
        </SmallList>
      </GroupBody>
    </Group>
    <Sep />
    <Group $w={82}>
      <GroupBody>
        <BoxButton $w={70} $ml={5} $active>
          <IconBox><ExportIcon /></IconBox>
          <BigLabel>导出</BigLabel>
          <DownArrow $mt={10} />
        </BoxButton>
      </GroupBody>
    </Group>
    <Sep />
    <PinSlot><PinIcon /></PinSlot>
  </Ribbon>
);

const LeftColumn = () => (
  <LeftPane>
    <DocStrip>
      <StripGrip />
      <DocTab>测试<TabClose>×</TabClose></DocTab>
    </DocStrip>
    <PlotArea><Plot /></PlotArea>
    <PanelHead>拟合表<RoundDown /></PanelHead>
    <Table>
      <TableHeadRow>
        {HEADERS.map((h, i) => (
          <HeadCell key={i}><Grip />{h}</HeadCell>
        ))}
      </TableHeadRow>
      <TableBodyRow>
        <BodyCell><StatusOk /></BodyCell>
        {ROW.map((c, i) => <BodyCell key={i}>{c}</BodyCell>)}
      </TableBodyRow>
    </Table>
  </LeftPane>
);

const RightColumn = () => (
  <RightPane>
    <OptionsHead>拟合选项<RoundDown $light /></OptionsHead>
    <OptionsBody>
      <FitName>傅里叶</FitName>
      <Formula>
        a0 + a1*cos(x*w) +<br />b1*sin(x*w) + ... +<br />a6*cos(6*x*w)+b6*sin(6*x*w)
      </Formula>
      <FieldSelect>6<DownArrow $s={8} /></FieldSelect>
      <FieldLabel>中心化并缩放</FieldLabel>
      <Checkbox />
      <SectionTitle>高级选项</SectionTitle>
      <HelpLink>了解拟合选项</HelpLink>
    </OptionsBody>
    <ResultsHead>
      <DownArrow $s={9} $c="#a8a8a8" $ml={2} />
      <HeadText>结果</HeadText>
      <RoundDown />
    </ResultsHead>
    <ResultName>拟合名称: 测试</ResultName>
    <ResultBox>
      <ResultText>
        <ResultLine>常规模型 Fourier6:</ResultLine>
        <ResultLine $indent={33}>f(x) =</ResultLine>
        <ResultLine $indent={100}>a0 + a1*cos(x*w) + b1*sin(x*w) +</ResultLine>
        <ResultLine $indent={100}>a2*cos(2*x*w) + b2*sin(2*x*w) +</ResultLine>
        <ResultLine>a3*cos(3*x*w) + b3*sin(3*x*w) +</ResultLine>
        <ResultLine $indent={100}>a4*cos(4*x*w) + b4*sin(4*x*w) +</ResultLine>
        <ResultLine>a5*cos(5*x*w) + b5*sin(5*x*w) +</ResultLine>
        <ResultLine $indent={100}>a6*cos(6*x*w) + b6*sin(6*x*w)</ResultLine>
        <ResultLine>系数(置信边界为 95%):</ResultLine>
        {COEFS.map(([n, v, r]) => (
          <CoefRow key={n}><span>{n}</span><span>{v}</span><span>{r}</span></CoefRow>
        ))}
      </ResultText>
      <ScrollTrack>
        <ScrollUp />
        <ScrollThumb />
      </ScrollTrack>
    </ResultBox>
  </RightPane>
);

export default function App() {
  return (
    <Page>
      <GlobalStyle />
      <TitleBar>
        <AppTab>曲线拟合器</AppTab>
        <HelpButton><HelpIcon /></HelpButton>
      </TitleBar>
      <RibbonBar />
      <Work>
        <LeftColumn />
        <RightColumn />
      </Work>
      <ExportMenu>
        {MENU.map((m, i) => (
          <MenuItem key={i}>
            <MenuIcon>{m.icon}</MenuIcon>
            <div>
              <MenuTitle>{m.title}</MenuTitle>
              <MenuDesc>{m.desc}</MenuDesc>
            </div>
          </MenuItem>
        ))}
      </ExportMenu>
      <Highlight $x={1788} $y={59} $w={147} $h={198} />
      <Highlight $x={1222} $y={208} $w={665} $h={436} />
      <Highlight $x={1788} $y={208} $w={94} $h={49} $c="#f5e63a" />
      <Highlight $x={1882} $y={242} $w={53} $h={15} $c="#0a3f5a" />
      <Watermark>CSDN @快乐星球居民13号</Watermark>
    </Page>
  );
}
